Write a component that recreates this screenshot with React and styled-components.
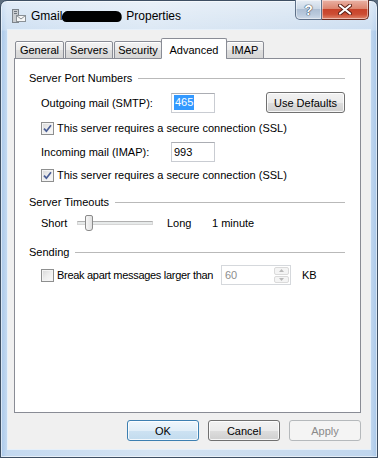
import React from 'react';
import styled, { createGlobalStyle } from 'styled-components';

const GlobalStyle = createGlobalStyle`
  html, body {
    margin: 0;
    padding: 0;
    background: #5d6d7e;
  }
  body {
    font-family: "Liberation Sans", Arial, sans-serif;
    font-size: 11px;
    color: #000;
  }
`;

const Frame = styled.div`
  box-sizing: border-box;
  width: 378px;
  height: 458px;
  display: flex;
  flex-direction: column;
  padding: 0 7px 8px;
  border: 1px solid #3e4f63;
  border-radius: 7px 7px 0 0;
  background:
    linear-gradient(180deg, rgba(255, 255, 255, 0.5) 0, rgba(255, 255, 255, 0.2) 29px, rgba(255, 255, 255, 0) 30px),
    linear-gradient(90deg, #a9c8ea 0, #c4d9f0 6px, #d4e3f2 40%, #c9dbee 75%, #c0d6ee calc(100% - 6px), #a9c8ea 100%);
  box-shadow: inset 0 0 0 1px rgba(255, 255, 255, 0.55);
`;

const TitleBar = styled.div`
  height: 29px;
  flex-shrink: 0;
  display: flex;
  align-items: center;
`;

const AppIcon = styled.svg`
  width: 16px;
  height: 16px;
  margin: 1px 5px 0 2px;
  flex-shrink: 0;
`;

const Title = styled.div`
  display: flex;
  align-items: center;
  font-size: 12px;
  color: #000;
  margin-top: 1px;
`;

const Redaction = styled.span`
  display: inline-block;
  width: 60px;
  height: 11px;
  margin: 0 4px 0 0;
  background: #000;
  border-radius: 6px 9px 5px 7px;
  transform: skewX(-10deg);
`;

const CaptionGroup = styled.div`
  display: flex;
  align-self: flex-start;
  margin: -1px 1px 0 auto;
`;

const CaptionButton = styled.div`
  box-sizing: border-box;
  width: ${(p) => p.w}px;
  height: 20px;
  display: flex;
  align-items: center;
  justify-content: center;
  border: 1px solid ${(p) => (p.close ? '#6d2b1f' : '#5f7189')};
  border-top: none;
  border-left-width: ${(p) => (p.close ? 0 : 1)}px;
  border-radius: ${(p) => (p.close ? '0 0 5px 0' : '0 0 0 5px')};
  background: ${(p) =>
    p.close
      ? 'linear-gradient(180deg, #eab2a5 0, #dc8670 45%, #c8432a 50%, #cc4d33 75%, #e0866c 100%)'
      : 'linear-gradient(180deg, #e6edf5 0, #cbd8e6 45%, #aebfd4 50%, #b9c9dc 75%, #cdd9e8 100%)'};
  box-shadow: inset 0 0 0 1px rgba(255, 255, 255, 0.45);
  color: #fff;
  font-weight: bold;
  font-size: 14px;
  text-shadow: 0 0 1px #3a4656, 0 0 1px #3a4656, 0 0 1px #3a4656;
`;

const Body = styled.div`
  flex: 1;
  display: flex;
  flex-direction: column;
  background: #f0f0f0;
  padding: 8px 9px 8px 6px;
  box-shadow: 0 0 0 1px #e6f0fa;
`;

const TabStrip = styled.div`
  display: flex;
  align-items: flex-end;
  gap: 1px;
  height: 21px;
  padding-left: 1px;
  margin-bottom: -1px;
  position: relative;
  z-index: 1;
`;

const Tab = styled.div`
  box-sizing: border-box;
  width: ${(p) => p.w}px;
  height: ${(p) => (p.active ? 21 : 18)}px;
  margin: ${(p) => (p.active ? '0 -2px 0 -2px' : '0')};
  padding-top: ${(p) => (p.active ? 2 : 0)}px;
  display: flex;
  align-items: center;
  justify-content: center;
  border: 1px solid #898c95;
  border-bottom: ${(p) => (p.active ? '1px solid #fff' : '1px solid #898c95')};
  border-radius: 2px 2px 0 0;
  background: ${(p) =>
    p.active ? '#fff' : 'linear-gradient(180deg, #f3f3f3 0, #ebebeb 50%, #dedede 51%, #d6d6d6 100%)'};
  box-shadow: ${(p) => (p.active ? 'none' : 'inset 0 1px 0 #fff')};
  font-size: 11px;
`;

const Panel = styled.div`
  flex: 1;
  display: flex;
  flex-direction: column;
  background: #fff;
  border: 1px solid #898c95;
  padding: 0 15px 0 14px;
`;

const Row = styled.div`
  display: flex;
  align-items: center;
  height: ${(p) => p.h || 14}px;
  margin-top: ${(p) => p.top}px;
  margin-left: ${(p) => (p.indent ? 12 : 0)}px;
  white-space: nowrap;
`;

const GroupLine = styled.div`
  flex: 1;
  height: 1px;
  margin-left: 6px;
  background: #b9b9b9;
`;

const FieldLabel = styled.span`
  width: ${(p) => p.w}px;
  margin-left: ${(p) => p.gap || 0}px;
  flex-shrink: 0;
`;

const TextBox = styled.div`
  box-sizing: border-box;
  width: 44px;
  height: 20px;
  display: flex;
  align-items: center;
  padding-left: 2px;
  border: 1px solid #c9ccd2;
  border-top-color: #abadb3;
  background: #fff;
`;

const Selection = styled.span`
  background: #3399ff;
  color: #fff;
  padding: 1px 1px 2px;
`;

const PushButton = styled.button`
  box-sizing: border-box;
  width: ${(p) => p.w}px;
  height: 21px;
  margin-left: ${(p) => (p.right ? 'auto' : '0')};
  padding: 0;
  font-family: inherit;
  font-size: 11px;
  color: ${(p) => (p.disabled ? '#8a8a8a' : '#000')};
  border: 1px solid ${(p) => (p.primary ? '#3c7fb1' : p.disabled ? '#b5b9bc' : '#707070')};
  border-radius: 3px;
  background: ${(p) =>
    p.disabled
      ? '#f4f4f4'
      : p.primary
      ? 'linear-gradient(180deg, #eef6fc 0, #e1eef8 50%, #cde2f2 51%, #c2dbee 100%)'
      : 'linear-gradient(180deg, #f2f2f2 0, #ebebeb 50%, #dddddd 51%, #cfcfcf 100%)'};
  box-shadow: inset 0 0 0 1px ${(p) => (p.disabled ? 'transparent' : 'rgba(255, 255, 255, 0.8)')};
`;

const CheckBox = styled.span`
  box-sizing: border-box;
  width: 13px;
  height: 13px;
  flex-shrink: 0;
  display: inline-flex;
  align-items: center;
  justify-content: center;
  border: 1px solid #8e8f8f;
  background: linear-gradient(135deg, #d7d7d7 0, #eeeeee 50%, #fafafa 100%);
  box-shadow: inset 0 0 0 1px #f4f4f4;
`;

const CheckText = styled.span`
  margin-left: 3px;
  width: ${(p) => (p.w ? `${p.w}px` : 'auto')};
  letter-spacing: ${(p) => (p.tight ? '-0.3px' : 'normal')};
  flex-shrink: 0;
  white-space: nowrap;
`;

const SliderBox = styled.div`
  position: relative;
  width: 76px;
  height: 20px;
  display: flex;
  align-items: center;
  flex-shrink: 0;
`;

const Track = styled.div`
  box-sizing: border-box;
  width: 100%;
  height: 4px;
  border: 1px solid #d6d6d6;
  border-top-color: #b0b0b0;
  background: #e7eaea;
`;

const Thumb = styled.div`
  position: absolute;
  left: 8px;
  top: 2px;
  box-sizing: border-box;
  width: 8px;
  height: 16px;
  border: 1px solid #8a8a8a;
  border-radius: 2px 2px 3px 3px;
  background: linear-gradient(90deg, #f6f6f6, #e0e0e0);
`;

const SpinBox = styled.div`
  box-sizing: border-box;
  width: 70px;
  height: 20px;
  display: flex;
  border: 1px solid #d5d8dc;
  background: #fff;
  flex-shrink: 0;
`;

const SpinText = styled.span`
  flex: 1;
  display: flex;
  align-items: center;
  padding-left: 3px;
  color: #8d8d8d;
`;

const SpinButtons = styled.div`
  width: 15px;
  display: flex;
  flex-direction: column;
  gap: 1px;
  padding: 1px 1px 1px 0;
`;

const SpinButton = styled.div`
  flex: 1;
  display: flex;
  align-items: center;
  justify-content: center;
  border: 1px solid #dadada;
  border-radius: 2px;
  background: #f4f4f4;
`;

const Unit = styled.span`
  margin-left: 11px;
`;

const Footer = styled.div`
  display: flex;
  justify-content: flex-end;
  gap: 9px;
  margin-top: 7px;
`;

const Check = () => (
  <svg width="9" height="9" viewBox="0 0 9 9">
    <path d="M1 4.6 L3.4 7.2 L8 1.2" fill="none" stroke="#4a5e95" strokeWidth="1.7" />
  </svg>
);

const Arrow = ({ up }) => (
  <svg width="5" height="3" viewBox="0 0 5 3">
    <path d={up ? 'M0 3 L2.5 0 L5 3 Z' : 'M0 0 L2.5 3 L5 0 Z'} fill="#b9b9b9" />
  </svg>
);

const tabs = [
  { label: 'General', w: 49 },
  { label: 'Servers', w: 48 },
  { label: 'Security', w: 48 },
  { label: 'Advanced', w: 66, active: true },
  { label: 'IMAP', w: 38 },
];

const App = () => (
  <>
    <GlobalStyle />
    <Frame>
      <TitleBar>
        <AppIcon viewBox="0 0 16 16">
          <rect x="2.5" y="1.5" width="6" height="13" fill="#c9ccd0" stroke="#7d848c" />
          <rect x="4" y="3" width="3" height="1" fill="#6f767e" />
          <rect x="4" y="5" width="3" height="1" fill="#6f767e" />
          <rect x="6.5" y="7.5" width="9" height="6" fill="#f7f7f7" stroke="#8a9096" />
          <path d="M6.5 7.5 L11 11 L15.5 7.5" fill="none" stroke="#8a9096" />
        </AppIcon>
        <Title>
          Gmail
          <Redaction />
          Properties
        </Title>
        <CaptionGroup>
          <CaptionButton w={27}>?</CaptionButton>
          <CaptionButton w={47} close>
            <svg width="14" height="11" viewBox="0 0 14 11">
              <path d="M2 1.5 L12 9.5 M12 1.5 L2 9.5" stroke="#5a1f15" strokeWidth="4" strokeLinecap="round" />
              <path d="M2 1.5 L12 9.5 M12 1.5 L2 9.5" stroke="#fff" strokeWidth="2.2" strokeLinecap="round" />
            </svg>
          </CaptionButton>
        </CaptionGroup>
      </TitleBar>

      <Body>
        <TabStrip>
          {tabs.map((t) => (
            <Tab key={t.label} w={t.w} active={t.active}>
              {t.label}
            </Tab>
          ))}
        </TabStrip>

        <Panel>
          <Row top={12}>
            Server Port Numbers
            <GroupLine />
          </Row>
          <Row top={7} h={21} indent>
            <FieldLabel w={130}>Outgoing mail (SMTP):</FieldLabel>
            <TextBox>
              <Selection>465</Selection>
            </TextBox>
            <PushButton w={79} right>
              Use Defaults
            </PushButton>
          </Row>
          <Row top={8} indent>
            <CheckBox>
              <Check />
            </CheckBox>
            <CheckText>This server requires a secure connection (SSL)</CheckText>
          </Row>
          <Row top={7} h={20} indent>
            <FieldLabel w={130}>Incoming mail (IMAP):</FieldLabel>
            <TextBox>993</TextBox>
          </Row>
          <Row top={6} indent>
            <CheckBox>
              <Check />
            </CheckBox>
            <CheckText>This server requires a secure connection (SSL)</CheckText>
          </Row>

          <Row top={13}>
            Server Timeouts
            <GroupLine />
          </Row>
          <Row top={4} h={20} indent>
            <FieldLabel w={36}>Short</FieldLabel>
            <SliderBox>
              <Track />
              <Thumb />
            </SliderBox>
            <FieldLabel w={45} gap={14}>
              Long
            </FieldLabel>
            <span>1 minute</span>
          </Row>

          <Row top={12}>
            Sending
            <GroupLine />
          </Row>
          <Row top={6} h={20} indent>
            <CheckBox />
            <CheckText w={164} tight>
              Break apart messages larger than
            </CheckText>
            <SpinBox>
              <SpinText>60</SpinText>
              <SpinButtons>
                <SpinButton>
                  <Arrow up />
                </SpinButton>
                <SpinButton>
                  <Arrow />
                </SpinButton>
              </SpinButtons>
            </SpinBox>
            <Unit>KB</Unit>
          </Row>
        </Panel>

        <Footer>
          <PushButton w={72} primary>
            OK
          </PushButton>
          <PushButton w={72}>Cancel</PushButton>
          <PushButton w={72} disabled>
            Apply
          </PushButton>
        </Footer>
      </Body>
    </Frame>
  </>
);

export default App;
